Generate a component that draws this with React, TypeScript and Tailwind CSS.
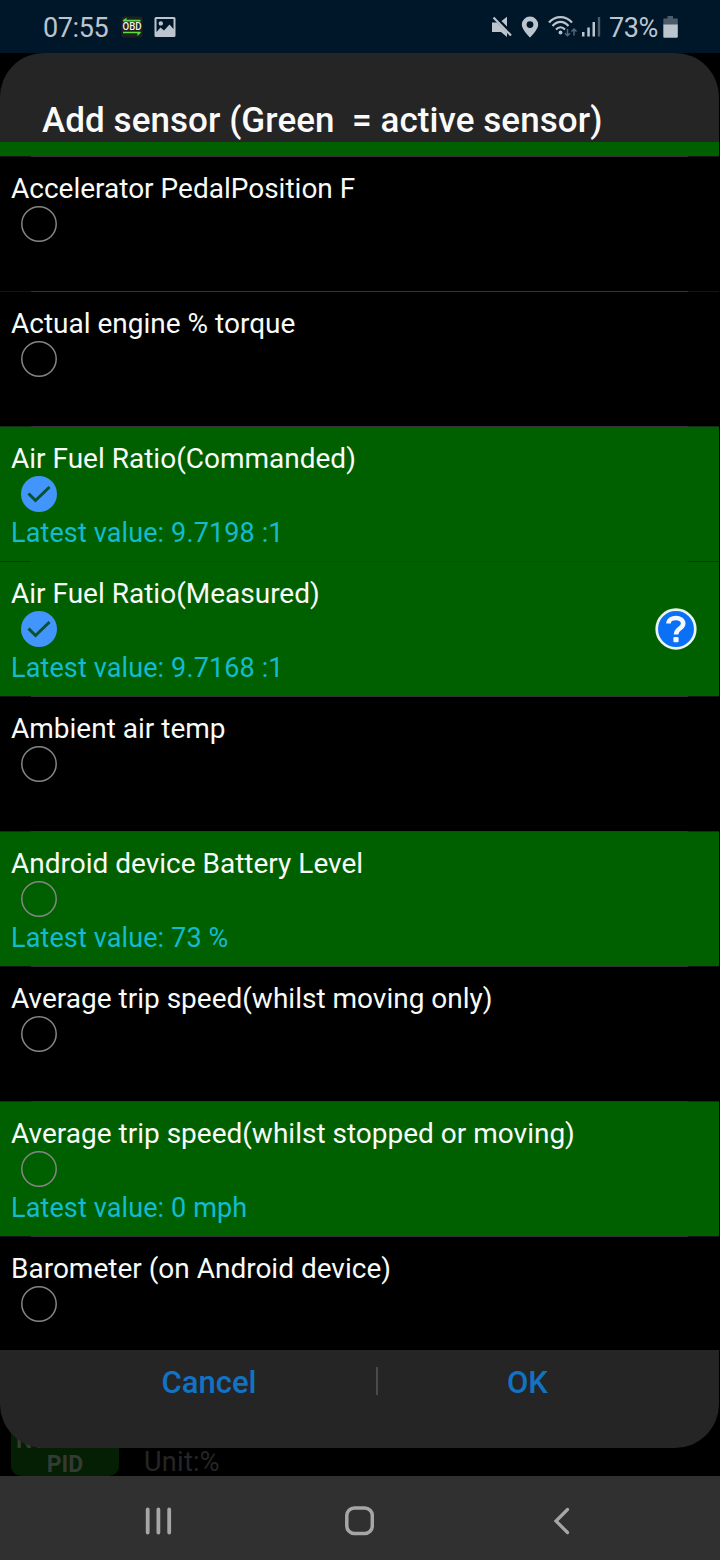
import { useState } from 'react';
import clsx from 'clsx';

interface Sensor {
  name: string;
  active?: boolean;
  selected?: boolean;
  value?: string;
  hasHelp?: boolean;
}

const SENSORS: Sensor[] = [
  { name: 'Accelerator PedalPosition F' },
  { name: 'Actual engine % torque' },
  { name: 'Air Fuel Ratio(Commanded)', active: true, selected: true, value: '9.7198 :1' },
  { name: 'Air Fuel Ratio(Measured)', active: true, selected: true, value: '9.7168 :1', hasHelp: true },
  { name: 'Ambient air temp' },
  { name: 'Android device Battery Level', active: true, value: '73 %' },
  { name: 'Average trip speed(whilst moving only)' },
  { name: 'Average trip speed(whilst stopped or moving)', active: true, value: '0 mph' },
  { name: 'Barometer (on Android device)' },
];

function ObdIcon() {
  return (
    <svg width="22" height="22" viewBox="0 0 22 22" className="block">
      <rect x="0.5" y="0.5" width="21" height="21" rx="2" fill="#1c231f" />
      <path d="M19.500 4.700H2M2 16.500H19.500" fill="none" stroke="#5fdc45" strokeWidth="1.700" />
      <path d="M1.500 5L5.500 1.500V5zM20 16.500L16.500 20v-3.500z" fill="#5fdc45" />
      <text x="11" y="14" textAnchor="middle" fontSize="10" fontWeight="500" textLength="19" lengthAdjust="spacingAndGlyphs" fill="#f1f3f1">
        OBD
      </text>
    </svg>
  );
}

function ImageIcon() {
  return (
    <svg width="22" height="20" viewBox="0 0 22 20" className="block">
      <path
        fillRule="evenodd"
        fill="#bcc4cd"
        d="M2 0h18a1.500 1.500 0 0 1 1.500 1.500v17a1.500 1.500 0 0 1-1.500 1.500H2a1.500 1.500 0 0 1-1.500-1.500v-17A1.500 1.500 0 0 1 2 0zM2.500 2v13l4-4.500 3.500 3 5.500-6 4 4.500V2zM6.800 4.200a2.200 2.200 0 1 1 0 4.400 2.200 2.200 0 0 1 0-4.400z"
      />
    </svg>
  );
}

function MuteIcon() {
  return (
    <svg width="20" height="22" viewBox="0 0 20 22" className="block">
      <path d="M0 6.500h5L15 16.500V21L9 16H0zM9.500 5L15 .8v9.700z" fill="#bcc4cd" />
      <path d="M1.500 1.500L19 19.500" stroke="#bcc4cd" strokeWidth="2.200" />
    </svg>
  );
}

function PinIcon() {
  return (
    <svg width="18" height="22" viewBox="0 0 18 22" className="block">
      <path
        fillRule="evenodd"
        fill="#bcc4cd"
        d="M9 .5a8.200 8.200 0 0 1 8.200 8.200C17.200 13.500 9 21.500 9 21.500S.8 13.500.8 8.700A8.200 8.200 0 0 1 9 .5zM9 5.200a3.400 3.400 0 1 0 0 6.800 3.400 3.400 0 0 0 0-6.800z"
      />
    </svg>
  );
}

function WifiIcon() {
  return (
    <svg width="30" height="23" viewBox="0 0 30 23" className="block">
      <g fill="none" stroke="#bcc4cd" strokeWidth="2.200">
        <path d="M1 7.500C7.500.3 17.500.3 24 7.500" />
        <path d="M4.500 11C9.500 5.600 15.500 5.600 20.500 11" />
        <path d="M8 14.500c2.800-3 6.200-3 9 0" />
      </g>
      <circle cx="12.500" cy="17.500" r="1.900" fill="#bcc4cd" />
      <path d="M19.500 14v6.500m-2.500-2.300l2.500 2.500 2.500-2.500M26 20.500V14m-2.500 2.500L26 14l2.500 2.500" fill="none" stroke="#566878" strokeWidth="1.500" />
    </svg>
  );
}

function SignalIcon() {
  return (
    <svg width="19" height="21" viewBox="0 0 19 21" className="block">
      <path d="M0 16h2.500v4.500H0zM5.300 11.500h2.500v9H5.300zM10.500 6H13v14.500h-2.500z" fill="#bcc4cd" />
      <path d="M15.800 1h2.400v19.500h-2.400z" fill="#4b5c6b" />
    </svg>
  );
}

function BatteryIcon() {
  return (
    <svg width="15" height="22" viewBox="0 0 15 22" className="block">
      <path d="M4.500 0h5.500v2.500H14a.8.8 0 0 1 .8.800V9H.3V3.300a.8.800 0 0 1 .8-.8h3.400z" fill="#4b5c6b" />
      <path d="M.3 8.500h14.500v12a1.200 1.200 0 0 1-1.200 1.200H1.500a1.200 1.200 0 0 1-1.200-1.200z" fill="#bcc4cd" />
    </svg>
  );
}

function HelpIcon() {
  return (
    <svg width="42" height="42" viewBox="0 0 42 42" className="block">
      <circle cx="21" cy="21" r="19.300" fill="#0a70f5" stroke="#e9f5ee" strokeWidth="2.700" />
      <path d="M13.500 15.500C13.500 8.200 28.200 8 28.200 15.500c0 5.300-7.200 4.800-7.200 11" fill="none" stroke="#f3f8ff" strokeWidth="4.600" />
      <rect x="18.400" y="29" width="5.200" height="5.200" rx="1.200" fill="#f3f8ff" />
    </svg>
  );
}

function StatusBar() {
  return (
    <header className="flex h-[53px] items-center justify-between bg-[#001629] pl-[43px] pr-[42px] text-[27px] text-[#bcc4cd]">
      <div className="flex items-center">
        <span className="w-[78px] pt-[2px] leading-[32px] tracking-[-0.4px]">07:55</span>
        <ObdIcon />
        <span className="ml-[11px]"><ImageIcon /></span>
      </div>
      <div className="flex items-center">
        <MuteIcon />
        <span className="ml-[9px]"><PinIcon /></span>
        <span className="ml-[9px]"><WifiIcon /></span>
        <span className="ml-[4px]"><SignalIcon /></span>
        <span className="ml-[8px] w-[54px] whitespace-nowrap pt-[2px] leading-[32px] tracking-[-0.4px]">73%</span>
        <BatteryIcon />
      </div>
    </header>
  );
}

interface CheckCircleProps {
  checked: boolean;
  onToggle: () => void;
}

function CheckCircle({ checked, onToggle }: CheckCircleProps) {
  return (
    <button onClick={onToggle} role="checkbox" aria-checked={checked} className="ml-[10px] mt-px block size-9">
      <svg width="36" height="36" viewBox="0 0 36 36">
        {checked ? (
          <>
            <circle cx="18" cy="18" r="18" fill="#4295fb" />
            <path d="M7.500 17.500l7 7L28.500 11" fill="none" stroke="#07512e" strokeWidth="3" />
          </>
        ) : (
          <circle cx="18" cy="18" r="17.200" fill="none" stroke="#858585" strokeWidth="1.500" />
        )}
      </svg>
    </button>
  );
}

// Divider that is slightly brighter between the list insets
function Divider() {
  return (
    <div className="h-px bg-[#1c1c1c]/70 px-[31px]">
      <div className="h-px bg-[#343434]" />
    </div>
  );
}

interface SensorRowProps {
  sensor: Sensor;
  checked: boolean;
  onToggle: () => void;
}

function SensorRow({ sensor, checked, onToggle }: SensorRowProps) {
  return (
    <li className={clsx('h-[135px] shrink-0', sensor.active ? 'bg-[#006000]' : 'bg-black')}>
      <Divider />
      <div className="flex h-[134px] items-center justify-between pl-[11px] pr-[22px]">
        <div className="h-full pt-[15px]">
          <p className="whitespace-nowrap text-[28px] leading-[33px] text-[#f8fbf8]">{sensor.name}</p>
          <CheckCircle checked={checked} onToggle={onToggle} />
          {sensor.value && (
            <p className="mt-[5px] whitespace-nowrap text-[27px] leading-[32px] tracking-[0.12px] text-[#13bad2]">
              Latest value: {sensor.value}
            </p>
          )}
        </div>
        {sensor.hasHelp && <HelpIcon />}
      </div>
    </li>
  );
}

function NavBar() {
  return (
    <nav className="flex h-[84px] items-center bg-[#303030] pt-[5px]">
      <svg width="27" height="28" viewBox="0 0 27 28" className="ml-[145px]">
        <path d="M2.700 2.500v23M13.400 2.500v23M24.200 2.500v23" stroke="#a6a6a6" strokeWidth="3.800" strokeLinecap="round" />
      </svg>
      <svg width="30" height="30" viewBox="0 0 30 30" className="ml-[172px]">
        <rect x="2.800" y="2" width="25.500" height="25.500" rx="7.500" fill="none" stroke="#a6a6a6" strokeWidth="3.500" />
      </svg>
      <svg width="18" height="28" viewBox="0 0 18 28" className="ml-[179px]">
        <path d="M14.500 2.500L3 14l11.500 11.500" fill="none" stroke="#a6a6a6" strokeWidth="3.200" strokeLinecap="round" />
      </svg>
    </nav>
  );
}

export default function App() {
  const [selected, setSelected] = useState<string[]>(
    SENSORS.filter((s) => s.selected).map((s) => s.name),
  );

  const toggle = (name: string) => {
    setSelected((prev) => (prev.includes(name) ? prev.filter((n) => n !== name) : [...prev, name]));
  };

  return (
    <div className="h-[1560px] w-[720px] overflow-hidden bg-black font-['Roboto',sans-serif]">
      <StatusBar />

      <main className="relative h-[1423px] overflow-hidden">
        {/* Dimmed screen behind the dialog */}
        <div className="absolute bottom-0 left-[11px] flex items-end">
          <div className="h-[60px] w-[108px] rounded-[10px] bg-[#041f04] pt-[13px] text-[23px] font-bold leading-[23px] text-[#343a34]">
            <p className="pl-[5px]">NO</p>
            <p className="pt-px text-center">PID</p>
          </div>
          <p className="ml-[25px] text-[27px] leading-[28px] tracking-[0.3px] text-[#262626]">Unit:%</p>
        </div>

        <section className="relative flex h-[1395px] w-[719px] flex-col overflow-hidden rounded-[44px] bg-[#252525]">
          <h1 className="h-[89px] shrink-0 whitespace-pre pl-[42px] pt-[48px] text-[35px] font-medium leading-[40px] tracking-[0.06px] text-[#fafafa]">
            {'Add sensor (Green  = active sensor)'}
          </h1>

          <div className="h-[1208px] shrink-0 overflow-hidden">
            <div className="h-[14px] bg-[#006000]" />
            <ul>
              {SENSORS.map((sensor) => (
                <SensorRow
                  key={sensor.name}
                  sensor={sensor}
                  checked={selected.includes(sensor.name)}
                  onToggle={() => toggle(sensor.name)}
                />
              ))}
            </ul>
          </div>

          <div className="flex items-center px-[42px] pt-[15px] text-[31px] font-medium leading-[36px] text-[#1272c4]">
            <button className="w-[334px]">Cancel</button>
            <span className="mb-[4px] h-[28px] w-[2px] bg-[#4a4a4a]" />
            <button className="w-[299px]">OK</button>
          </div>
        </section>
      </main>

      <NavBar />
    </div>
  );
}
